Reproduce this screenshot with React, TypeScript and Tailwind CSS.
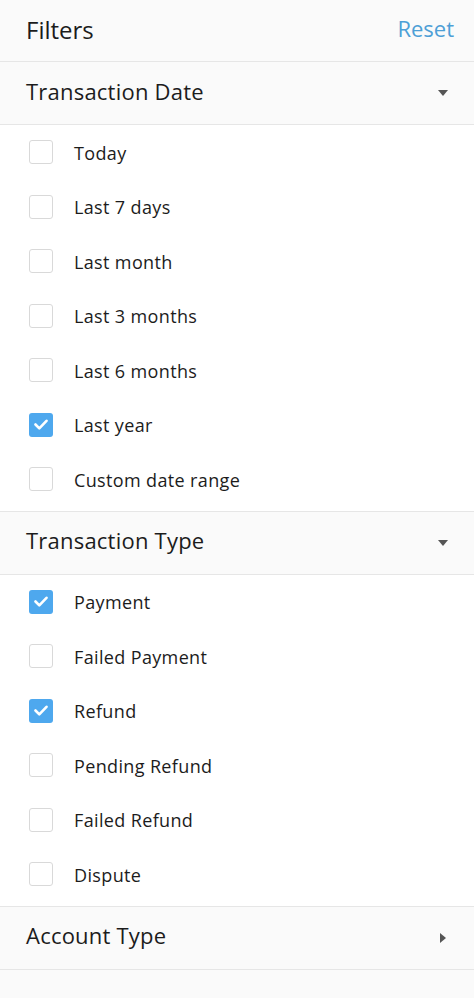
import { useState } from "react";

type Option = { id: string; label: string; checked: boolean };

const initialDate: Option[] = [
  { id: "today", label: "Today", checked: false },
  { id: "7d", label: "Last 7 days", checked: false },
  { id: "1m", label: "Last month", checked: false },
  { id: "3m", label: "Last 3 months", checked: false },
  { id: "6m", label: "Last 6 months", checked: false },
  { id: "1y", label: "Last year", checked: true },
  { id: "custom", label: "Custom date range", checked: false },
];

const initialType: Option[] = [
  { id: "payment", label: "Payment", checked: true },
  { id: "failed-payment", label: "Failed Payment", checked: false },
  { id: "refund", label: "Refund", checked: true },
  { id: "pending-refund", label: "Pending Refund", checked: false },
  { id: "failed-refund", label: "Failed Refund", checked: false },
  { id: "dispute", label: "Dispute", checked: false },
];

export default function App() {
  const [dates, setDates] = useState(initialDate);
  const [types, setTypes] = useState(initialType);

  function toggle(
    set: React.Dispatch<React.SetStateAction<Option[]>>,
    id: string,
  ) {
    set((opts) =>
      opts.map((o) => (o.id === id ? { ...o, checked: !o.checked } : o)),
    );
  }

  return (
    <div className="min-h-[998px] w-[474px] bg-[#fafafa] font-['Open_Sans',sans-serif] text-[#1c1c1c]">
      <div className="flex h-[62px] items-center justify-between border-b border-[#e6e6e6] pl-[26px] pr-[20px]">
        <h1 className="pb-[2px] text-[24px] leading-none">Filters</h1>
        <button type="button" className="pb-[5px] text-[22px] leading-none text-[#4d9fd6]">
          Reset
        </button>
      </div>

      <Section title="Transaction Date" open>
        {dates.map((o) => (
          <CheckRow key={o.id} option={o} onToggle={() => toggle(setDates, o.id)} />
        ))}
      </Section>

      <Section title="Transaction Type" open>
        {types.map((o) => (
          <CheckRow key={o.id} option={o} onToggle={() => toggle(setTypes, o.id)} />
        ))}
      </Section>

      <Section title="Account Type" open={false} />
    </div>
  );
}

function Section({
  title,
  open,
  children,
}: {
  title: string;
  open: boolean;
  children?: React.ReactNode;
}) {
  return (
    <section className="border-b border-[#e6e6e6]">
      <div className="flex h-[62px] items-center justify-between pl-[26px] pr-[26px]">
        <h2 className="pb-[5px] text-[22px] leading-none tracking-[0.01em]">{title}</h2>
        {open ? (
          <svg width="10" height="6" viewBox="0 0 10 6" className="fill-[#555]">
            <path d="M0 0h10L5 6z" />
          </svg>
        ) : (
          <svg width="6" height="10" viewBox="0 0 6 10" className="mr-[2px] fill-[#555]">
            <path d="M0 0v10l6-5z" />
          </svg>
        )}
      </div>
      {open && (
        <ul className="border-t border-[#e6e6e6] bg-white pb-[4px]">
          {children}
        </ul>
      )}
    </section>
  );
}

function CheckRow({ option, onToggle }: { option: Option; onToggle: () => void }) {
  return (
    <li
      className="flex h-[54.5px] cursor-pointer items-center gap-[21px] pl-[29px]"
      onClick={onToggle}
    >
      {option.checked ? (
        <span className="flex h-[24px] w-[24px] items-center justify-center rounded-[3px] bg-[#4ea8ee]">
          <svg width="14" height="11" viewBox="0 0 14 11" fill="none">
            <path
              d="M1.5 5.5l3.8 3.8L12.5 1.8"
              stroke="white"
              strokeWidth="2.6"
              strokeLinecap="round"
              strokeLinejoin="round"
            />
          </svg>
        </span>
      ) : (
        <span className="h-[24px] w-[24px] rounded-[3px] border border-[#d9d9d9] bg-white" />
      )}
      <span className="pt-[1px] text-[18px] leading-none tracking-[0.02em] text-[#1c1c1c]">
        {option.label}
      </span>
    </li>
  );
}
